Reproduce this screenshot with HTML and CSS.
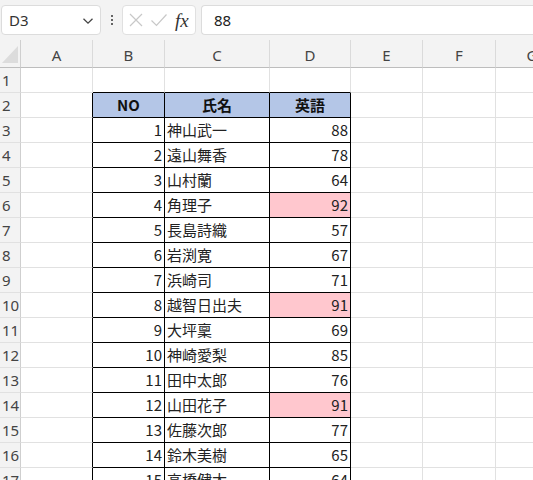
FILE: index.html
```html
<!DOCTYPE html>
<html lang="ja">
<head>
<meta charset="utf-8">
<link rel="stylesheet" href="styles.css">
</head>
<body>
<div class="toolbar">
  <div class="namebox">
    <span class="ref">D3</span>
    <svg class="chev" width="12" height="8" viewBox="0 0 12 8"><path d="M1.5 1.8 L6 6.2 L10.5 1.8" fill="none" stroke="#444" stroke-width="1.3"/></svg>
  </div>
  <div class="dots"><span></span><span></span><span></span></div>
  <div class="fbtns">
    <svg width="16" height="16" viewBox="0 0 16 16"><path d="M2 2 L14 14 M14 2 L2 14" stroke="#c8c8c8" stroke-width="1.2" fill="none"/></svg>
    <svg width="18" height="16" viewBox="0 0 18 16"><path d="M1.5 8.5 L6.5 13.5 L16.5 2.5" stroke="#c8c8c8" stroke-width="1.2" fill="none"/></svg>
    <span class="fx">fx</span>
  </div>
  <div class="formula">88</div>
</div>
<div class="sheet">
<table class="grid">
  <colgroup>
    <col class="c-h"><col class="c-a"><col class="c-b"><col class="c-c"><col class="c-d"><col class="c-e"><col class="c-f"><col class="c-g">
  </colgroup>
  <thead>
    <tr class="colhead">
      <th class="corner"><span class="tri"></span></th><th>A</th><th>B</th><th>C</th><th>D</th><th>E</th><th>F</th><th>G</th>
    </tr>
  </thead>
  <tbody>
    <tr><th class="rh">1</th><td></td><td class="above"></td><td class="above"></td><td class="above"></td><td></td><td></td><td></td></tr>
    <tr><th class="rh">2</th><td class="left"></td><td class="t hd">NO</td><td class="t hd">氏名</td><td class="t hd">英語</td><td></td><td></td><td></td></tr>
    <tr><th class="rh">3</th><td class="left"></td><td class="t num">1</td><td class="t">神山武一</td><td class="t num">88</td><td></td><td></td><td></td></tr>
    <tr><th class="rh">4</th><td class="left"></td><td class="t num">2</td><td class="t">遠山舞香</td><td class="t num">78</td><td></td><td></td><td></td></tr>
    <tr><th class="rh">5</th><td class="left"></td><td class="t num">3</td><td class="t">山村蘭</td><td class="t num">64</td><td></td><td></td><td></td></tr>
    <tr><th class="rh">6</th><td class="left"></td><td class="t num">4</td><td class="t">角理子</td><td class="t num hi">92</td><td></td><td></td><td></td></tr>
    <tr><th class="rh">7</th><td class="left"></td><td class="t num">5</td><td class="t">長島詩織</td><td class="t num">57</td><td></td><td></td><td></td></tr>
    <tr><th class="rh">8</th><td class="left"></td><td class="t num">6</td><td class="t">岩渕寛</td><td class="t num">67</td><td></td><td></td><td></td></tr>
    <tr><th class="rh">9</th><td class="left"></td><td class="t num">7</td><td class="t">浜崎司</td><td class="t num">71</td><td></td><td></td><td></td></tr>
    <tr><th class="rh">10</th><td class="left"></td><td class="t num">8</td><td class="t">越智日出夫</td><td class="t num hi">91</td><td></td><td></td><td></td></tr>
    <tr><th class="rh">11</th><td class="left"></td><td class="t num">9</td><td class="t">大坪稟</td><td class="t num">69</td><td></td><td></td><td></td></tr>
    <tr><th class="rh">12</th><td class="left"></td><td class="t num">10</td><td class="t">神崎愛梨</td><td class="t num">85</td><td></td><td></td><td></td></tr>
    <tr><th class="rh">13</th><td class="left"></td><td class="t num">11</td><td class="t">田中太郎</td><td class="t num">76</td><td></td><td></td><td></td></tr>
    <tr><th class="rh">14</th><td class="left"></td><td class="t num">12</td><td class="t">山田花子</td><td class="t num hi">91</td><td></td><td></td><td></td></tr>
    <tr><th class="rh">15</th><td class="left"></td><td class="t num">13</td><td class="t">佐藤次郎</td><td class="t num">77</td><td></td><td></td><td></td></tr>
    <tr><th class="rh">16</th><td class="left"></td><td class="t num">14</td><td class="t">鈴木美樹</td><td class="t num">65</td><td></td><td></td><td></td></tr>
    <tr><th class="rh">17</th><td class="left"></td><td class="t num">15</td><td class="t">高橋健太</td><td class="t num">64</td><td></td><td></td><td></td></tr>
  </tbody>
</table>
</div>
</body>
</html>
```

FILE: styles.css
```css
html, body {
  margin: 0;
  padding: 0;
  width: 533px;
  height: 480px;
  overflow: hidden;
  background: #ffffff;
  font-family: "Noto Sans", "Noto Sans CJK JP", sans-serif;
}

.toolbar {
  height: 40px;
  background: #f3f3f3;
  display: flex;
  align-items: flex-start;
  padding-top: 5px;
  box-sizing: border-box;
}

.namebox {
  margin-left: 1px;
  width: 100px;
  height: 30px;
  box-sizing: border-box;
  background: #fff;
  border: 1px solid #dcdcdc;
  border-radius: 4px;
  display: flex;
  align-items: center;
  justify-content: space-between;
  padding: 0 6px 0 7px;
}

.ref {
  font-size: 15px;
  color: #333;
  font-family: "Noto Sans", sans-serif;
}

.chev { display: block; margin-top: 1px; }

.dots {
  width: 21px;
  height: 30px;
  display: flex;
  flex-direction: column;
  align-items: center;
  justify-content: center;
  gap: 2px;
}
.dots span {
  width: 2px;
  height: 2px;
  background: #333;
  border-radius: 1px;
}

.fbtns {
  width: 74px;
  height: 30px;
  box-sizing: border-box;
  background: #fff;
  border: 1px solid #e0e0e0;
  border-radius: 4px;
  display: flex;
  align-items: center;
  padding-left: 5px;
  gap: 6px;
}
.fbtns svg { display: block; }

.fx {
  font-family: "Liberation Serif", serif;
  font-style: italic;
  font-size: 19px;
  color: #333;
  margin-left: 1px;
  line-height: 1;
}

.formula {
  margin-left: 5px;
  flex: 1;
  height: 30px;
  box-sizing: border-box;
  background: #fff;
  border: 1px solid #dcdcdc;
  border-right: none;
  border-radius: 4px 0 0 4px;
  font-size: 15px;
  color: #222;
  display: flex;
  align-items: center;
  padding-left: 12px;
}

.sheet {
  width: 533px;
  overflow: hidden;
}

.grid {
  border-collapse: separate;
  border-spacing: 0;
  table-layout: fixed;
  width: 569px;
}

.c-h { width: 21px; }
.c-a { width: 72px; }
.c-b { width: 72px; }
.c-c { width: 105px; }
.c-d { width: 81px; }
.c-e { width: 72px; }
.c-f { width: 73px; }
.c-g { width: 73px; }

.colhead th {
  height: 24px;
  padding: 3px 0 0 0;
  background: #f3f3f3;
  border-bottom: 1px solid #bdbdbd;
  border-right: 1px solid #dadada;
  font-weight: normal;
  font-size: 15px;
  color: #444;
  text-align: center;
  line-height: 24px;
  box-sizing: content-box;
}

.colhead th.corner {
  position: relative;
  border-right: 1px solid #cfcfcf;
}

.tri {
  position: absolute;
  left: 2px;
  bottom: 4px;
  width: 0;
  height: 0;
  border-left: 16px solid transparent;
  border-bottom: 17px solid #dcdcdc;
}

.rh {
  height: 24px;
  padding: 0;
  background: #f3f3f3;
  border-right: 1px solid #cfcfcf;
  border-bottom: 1px solid #e1e1e1;
  font-weight: normal;
  font-size: 15px;
  color: #444;
  text-align: left;
  line-height: 24px;
  white-space: nowrap;
  overflow: hidden;
  padding-left: 2px;
}

td {
  height: 24px;
  padding: 0 2px;
  border-right: 1px solid #e1e1e1;
  border-bottom: 1px solid #e1e1e1;
  font-family: "Noto Sans CJK JP", sans-serif;
  font-size: 15px;
  color: #222;
  line-height: 24px;
  white-space: nowrap;
  overflow: hidden;
}

td.left { border-right-color: #000; }
td.above { border-bottom-color: #000; }
td.t {
  border-right-color: #000;
  border-bottom-color: #000;
}
td.hd {
  background: #b4c6e7;
  font-weight: bold;
  text-align: center;
  color: #111;
}
td.num { text-align: right; }
td.hi { background: #ffc7ce; }
```
